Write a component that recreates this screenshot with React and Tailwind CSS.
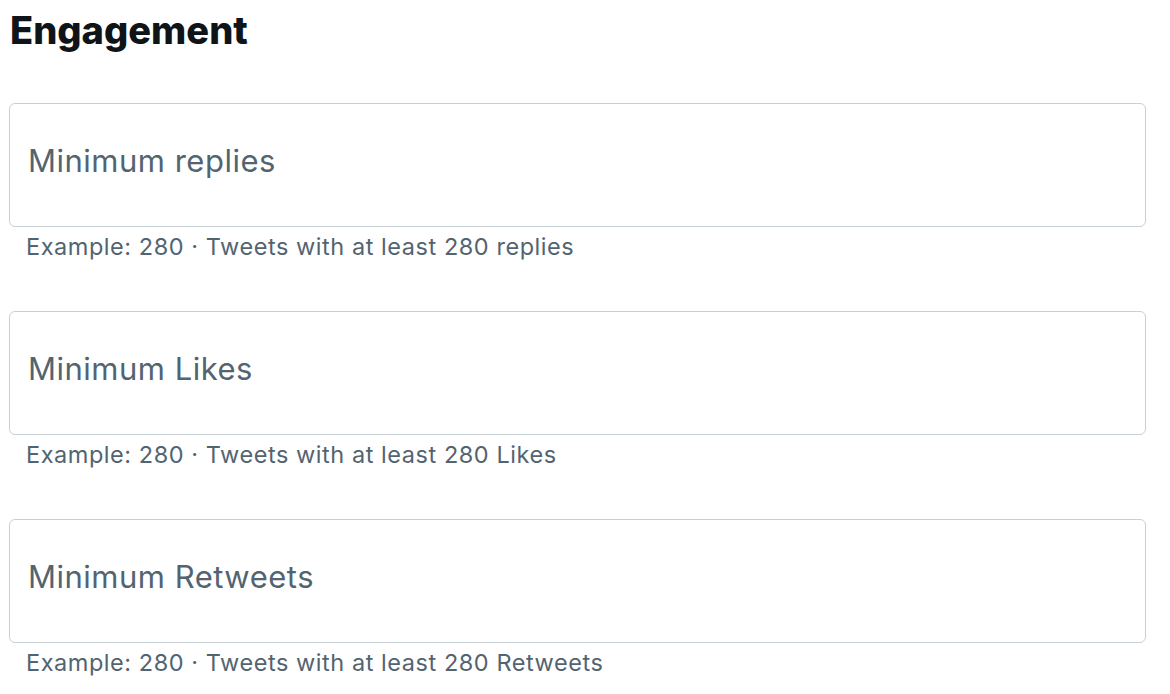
import React from 'react';

const fields = [
    { label: 'Minimum replies', hint: 'Example: 280 · Tweets with at least 280 replies' },
    { label: 'Minimum Likes', hint: 'Example: 280 · Tweets with at least 280 Likes' },
    { label: 'Minimum Retweets', hint: 'Example: 280 · Tweets with at least 280 Retweets' },
];

function NumberField({ label, hint }) {
    return (
        <div className="mb-[50px]">
            <label className="block h-[124px] rounded-[6px] border border-[#c6d1d6] bg-white pl-[18px] pt-[41px]">
                <span className="block text-[31px] leading-[31px] tracking-[0.5px] text-[#536471]">{label}</span>
            </label>
            <p className="mt-[6px] pl-[17px] text-[23.5px] leading-[28px] tracking-[0.55px] text-[#536471]">{hint}</p>
        </div>
    );
}

export default function App() {
    return (
        <div
            className="min-h-screen w-[1170px] bg-white px-[9px] pt-[8px]"
            style={{ fontFamily: 'Inter, "Noto Sans", sans-serif' }}
        >
            <div className="w-[1137px]">
                {/* Section title */}
                <h2 className="text-[38px] leading-[44px] font-extrabold text-[#0f1419] pl-[1px]">
                    Engagement
                </h2>

                <div className="mt-[51px]">
                    {fields.map((f) => (
                        <NumberField key={f.label} label={f.label} hint={f.hint} />
                    ))}
                </div>
            </div>
        </div>
    );
}
